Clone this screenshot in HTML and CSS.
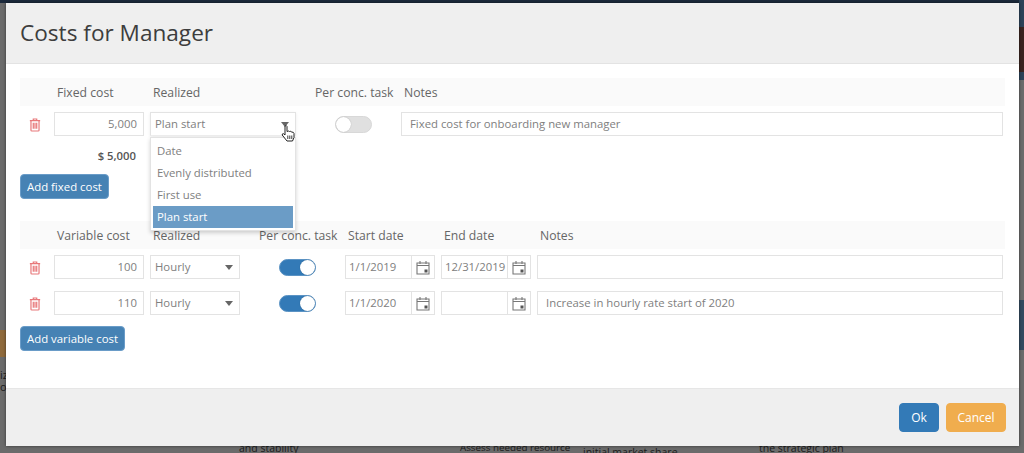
FILE: index.html
```html
<!DOCTYPE html>
<html lang="en">
<head>
<meta charset="utf-8">
<title>Costs for Manager</title>
<link rel="stylesheet" href="styles.css">
</head>
<body>
<svg width="0" height="0" class="defs">
  <defs>
    <symbol id="trash" viewBox="0 0 14 16">
      <path d="M5 2.5 V1 H9 V2.5 M1 3 H13 M2.3 3 V14 Q2.3 15 3.3 15 H10.7 Q11.7 15 11.7 14 V3 M5 5.5 V12.5 M7 5.5 V12.5 M9 5.5 V12.5" fill="none" stroke="#e8787a" stroke-width="1.4"/>
    </symbol>
    <symbol id="cal" viewBox="0 0 14 15">
      <path d="M1 3 H13 V14 H1 Z M1 5.5 H13 M4 1 V4 M10 1 V4" fill="none" stroke="#777" stroke-width="1.1"/>
      <rect x="8.5" y="9.5" width="3" height="3" fill="#555"/>
    </symbol>
  </defs>
</svg>

<div class="backdrop">
  <span class="bg bg-top"></span>
  <span class="bg bg-navy-a"></span>
  <span class="bg bg-red"></span>
  <span class="bg bg-navy-b"></span>
  <span class="bg bg-navy-c"></span>
  <span class="bg bg-orange"></span>
  <span class="bg bg-text bg-l1">iz</span>
  <span class="bg bg-text bg-l2">or</span>
  <span class="bg bg-text bg-t1">and stability</span>
  <span class="bg bg-text bg-t2">Assess needed resource</span>
  <span class="bg bg-text bg-t3">initial market share</span>
  <span class="bg bg-text bg-t4">the strategic plan</span>
</div>

<section class="modal">
  <header class="modal-head">
    <h1>Costs for Manager</h1>
  </header>

  <div class="modal-body">
    <div class="block">
      <div class="grid grid-fixed head-row">
        <span></span>
        <span class="lab">Fixed cost</span>
        <span class="lab">Realized</span>
        <span class="lab lab-toggle">Per conc. task</span>
        <span class="lab">Notes</span>
      </div>
      <div class="grid grid-fixed row">
        <svg class="trash"><use href="#trash"/></svg>
        <div class="field num">5,000</div>
        <div class="field select open">Plan start<i class="caret"></i></div>
        <div class="toggle-cell"><span class="toggle"></span></div>
        <div class="field">Fixed cost for onboarding new manager</div>
      </div>
      <div class="grid grid-fixed total-row">
        <span></span>
        <span class="total">$ 5,000</span>
      </div>
      <button class="btn add">Add fixed cost</button>
    </div>

    <div class="block block-var">
      <div class="grid grid-var head-row">
        <span></span>
        <span class="lab">Variable cost</span>
        <span class="lab">Realized</span>
        <span class="lab lab-toggle">Per conc. task</span>
        <span class="lab">Start date</span>
        <span class="lab">End date</span>
        <span class="lab">Notes</span>
      </div>
      <div class="grid grid-var row">
        <svg class="trash"><use href="#trash"/></svg>
        <div class="field num">100</div>
        <div class="field select">Hourly<i class="caret"></i></div>
        <div class="toggle-cell"><span class="toggle on"></span></div>
        <div class="field date"><span class="val">1/1/2019</span><span class="addon"><svg class="cal"><use href="#cal"/></svg></span></div>
        <div class="field date"><span class="val">12/31/2019</span><span class="addon"><svg class="cal"><use href="#cal"/></svg></span></div>
        <div class="field"></div>
      </div>
      <div class="grid grid-var row row-second">
        <svg class="trash"><use href="#trash"/></svg>
        <div class="field num">110</div>
        <div class="field select">Hourly<i class="caret"></i></div>
        <div class="toggle-cell"><span class="toggle on"></span></div>
        <div class="field date"><span class="val">1/1/2020</span><span class="addon"><svg class="cal"><use href="#cal"/></svg></span></div>
        <div class="field date"><span class="val"></span><span class="addon"><svg class="cal"><use href="#cal"/></svg></span></div>
        <div class="field">Increase in hourly rate start of 2020</div>
      </div>
      <button class="btn add">Add variable cost</button>
    </div>
  </div>

  <footer class="modal-foot">
    <button class="btn ok">Ok</button>
    <button class="btn cancel">Cancel</button>
  </footer>

  <ul class="menu">
    <li>Date</li>
    <li>Evenly distributed</li>
    <li>First use</li>
    <li class="sel">Plan start</li>
  </ul>

  <svg class="pointer" viewBox="0 0 14 18">
    <path d="M4 1.5 Q5.5 .5 6 2 V7 Q7.5 6 8.5 7 Q10 6.3 10.8 7.6 Q12.5 7.2 13 9 V13 L11.5 16.5 H6 L1.2 10.5 Q1 9 2.6 9.2 L4 10.5 Z" fill="#fff" stroke="#222" stroke-width="1"/>
    <path d="M6.8 11 V14.5 M8.8 11 V14.5 M10.8 11 V14.5" stroke="#222" stroke-width=".9"/>
  </svg>
</section>
</body>
</html>
```
FILE: styles.css
```css
* { box-sizing: border-box; }
html, body { margin: 0; height: 453px; overflow: hidden; }
body {
  background: #6b6b6b;
  font-family: "Open Sans", "Liberation Sans", sans-serif;
  font-size: 12px;
  color: #666;
}
.defs { position: absolute; }

.backdrop { position: absolute; inset: 0; overflow: hidden; }
.bg { position: absolute; }
.bg-top { left: 0; top: 0; width: 1024px; height: 3px; background: #1c2a3c; }
.bg-navy-a { left: 1019px; top: 0; width: 5px; height: 27px; background: #2c4258; }
.bg-red { left: 1019px; top: 27px; width: 5px; height: 45px; background: #3a2420; }
.bg-navy-b { left: 1019px; top: 72px; width: 5px; height: 8px; background: #2c4258; }
.bg-navy-c { left: 1019px; top: 300px; width: 5px; height: 50px; background: #33495f; }
.bg-orange { left: 0; top: 330px; width: 6px; height: 27px; background: #8f6a3c; }
.bg-text { color: #1c1c1c; white-space: nowrap; line-height: 14px; }
.bg-l1 { left: 0; top: 369px; font-size: 11px; line-height: 12px; }
.bg-l2 { left: 0; top: 381px; font-size: 11px; line-height: 12px; }
.bg-t1 { left: 239px; top: 441px; font-size: 10.5px; }
.bg-t2 { left: 460px; top: 441px; font-size: 9.8px; }
.bg-t3 { left: 583px; top: 445px; font-size: 10.5px; }
.bg-t4 { left: 759px; top: 441px; font-size: 10.5px; }

.modal {
  position: absolute;
  left: 6px;
  top: 3px;
  width: 1013px;
  height: 443px;
  display: flex;
  flex-direction: column;
  background: #fff;
  box-shadow: 0 0 3px rgba(0, 0, 0, .5);
}
.modal-head {
  height: 61px;
  flex: none;
  padding: 15px 14px 0;
  background: #efefef;
  border-bottom: 1px solid #e3e3e3;
}
h1 {
  margin: 0;
  font-size: 22.6px;
  line-height: 30px;
  font-weight: 400;
  color: #3d3d3d;
}
.modal-body { flex: 1; padding: 14px 14px 0; }
.block-var { margin-top: 22px; }

.grid { display: grid; column-gap: 6px; }
.grid-fixed { grid-template-columns: 28px 90px 146px 93px 602px; }
.grid-var { grid-template-columns: 28px 90px 90px 93px 90px 90px 466px; }
.head-row {
  width: 985px;
  height: 28px;
  align-items: center;
  background: #fafafa;
}
.lab { padding-left: 3px; color: #666; font-size: 12.2px; white-space: nowrap; }
.lab-toggle { padding-left: 13px; }
.row { height: 24px; margin-top: 6px; align-items: center; }
.row-second { margin-top: 12px; }

.trash { width: 12px; height: 14px; margin: 2px 0 0 9px; }
.field {
  height: 24px;
  line-height: 22px;
  padding: 0 8px;
  border: 1px solid #e3e3e3;
  background: #fff;
  color: #808080;
  font-size: 11.35px;
  white-space: nowrap;
  position: relative;
}
.num { text-align: right; padding-right: 6px; }
.select { padding-left: 4px; }
.caret {
  position: absolute;
  right: 6px;
  top: 9px;
  border-left: 4px solid transparent;
  border-right: 4px solid transparent;
  border-top: 5px solid #666;
}
.open { border-bottom-color: #eee; box-shadow: 0 1px 3px rgba(0, 0, 0, .08); }
.date { display: flex; padding: 0; }
.val { flex: 1; padding-left: 3px; min-width: 0; }
.addon {
  width: 23px;
  flex: none;
  border-left: 1px solid #e3e3e3;
  display: flex;
  align-items: center;
  justify-content: center;
}
.cal { width: 14px; height: 15px; }

.toggle-cell { padding-left: 33px; display: flex; align-items: center; }
.toggle {
  display: block;
  width: 37px;
  height: 17px;
  border-radius: 9px;
  background: #e0e0e0;
  border: 1px solid #d8d8d8;
  position: relative;
}
.toggle::after {
  content: "";
  position: absolute;
  left: 0;
  top: 0;
  width: 15px;
  height: 15px;
  border-radius: 50%;
  background: #fff;
  box-shadow: 0 0 1px rgba(0, 0, 0, .3);
}
.toggle.on { background: #337ab7; border-color: #5b93c4; }
.toggle.on::after { left: 20px; }

.total-row { height: 24px; margin-top: 7px; align-items: center; }
.total {
  font-size: 11.3px;
  font-weight: 600;
  color: #555;
  text-align: right;
  padding-right: 8px;
}

.btn {
  display: block;
  border: 1px solid #6a9cc8;
  border-radius: 4px;
  font-family: inherit;
  font-size: 12px;
  color: #fff;
  background: #4682b4;
  padding: 0;
}
.add { height: 25px; padding: 0 6px; margin-top: 7px; font-size: 11.4px; }
.row-second + .add { margin-top: 11px; }

.modal-foot {
  height: 58px;
  flex: none;
  display: flex;
  justify-content: flex-end;
  align-items: flex-start;
  gap: 7px;
  padding: 14px 13px 0 0;
  background: #efefef;
  border-top: 1px solid #e6e6e6;
}
.ok, .cancel { height: 29px; }
.ok { width: 40px; background: #337ab7; border-color: #337ab7; }
.cancel { width: 60px; background: #f0ad4e; border-color: #f0ad4e; }

.menu {
  position: absolute;
  left: 144px;
  top: 134px;
  width: 146px;
  height: 94px;
  margin: 0;
  padding: 2px;
  list-style: none;
  background: #fff;
  border: 1px solid #e3e3e3;
  box-shadow: 0 2px 4px rgba(0, 0, 0, .18);
}
.menu li {
  height: 22px;
  line-height: 21px;
  padding-left: 4px;
  color: #808080;
  font-size: 11.35px;
}
.menu .sel { background: #6b9cc6; color: #fff; }

.pointer { position: absolute; left: 275px; top: 121px; width: 14px; height: 19px; }
```
